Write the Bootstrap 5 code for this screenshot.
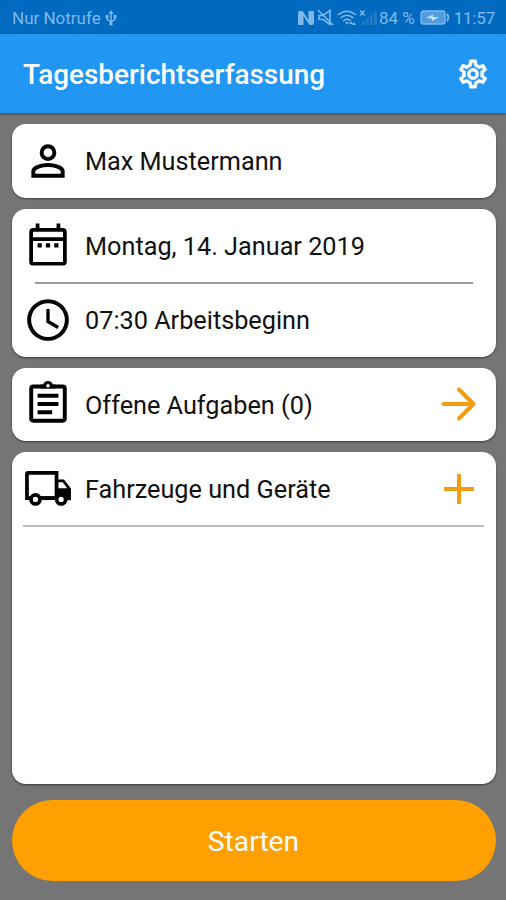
<!DOCTYPE html>
<html lang="de">
<head>
<meta charset="utf-8">
<meta name="viewport" content="width=device-width, initial-scale=1">
<title>Tagesberichtserfassung</title>
<link href="https://cdn.jsdelivr.net/npm/bootstrap@5.3.0/dist/css/bootstrap.min.css" rel="stylesheet">
<style>
body{font-family:Roboto,"Liberation Sans",sans-serif;background:#757575;color:#111;height:900px;overflow:hidden}
svg{display:block;flex:none}
.status-bar{height:34px;background:#0069c0;color:#7fb9ec;font-size:17px;line-height:34px;padding:2px 11px 0 12px}
.status-bar .clock{letter-spacing:-.2px}
.app-bar{height:79px;background:#2196f3;padding:2px 16px 0 23px;box-shadow:0 1px 3px rgba(0,0,0,.45)}
.app-title{font-size:27.900px;font-weight:500;line-height:40px}
.content{padding:11px 10.5px 19px 11.5px;gap:11px}
.panel{border:0;border-radius:14px;box-shadow:0 1px 2px rgba(0,0,0,.5)}
.entry{height:73.5px;padding:0 13px 0 11px;font-size:25.250px}
.entry .label{margin-left:12.5px;padding-top:3px;white-space:nowrap}
.divider{height:2px;background:#bbb;margin:-1px 12px -1px 11px}
.divider.inset{background:#999;margin:0 23px -1px 23px}
.accent{color:#f39c12}
.start{height:81px;background:#ffa000;font-size:28.200px;padding-top:9px;margin-top:5px;border:0}
.start:hover{background:#ffa000}
</style>
</head>
<body class="d-flex flex-column">
<div class="status-bar d-flex align-items-center justify-content-between">
  <div class="d-flex align-items-center"><span>Nur Notrufe</span>
    <svg class="ms-1" width="12" height="17" viewBox="0 0 12 17" fill="none" stroke="currentColor" stroke-width="1.5"><path d="M6 2v12M2 6v3l4 3 4-3V6"/><path d="M6 0l2.500 4h-5zM.5 5h3v3h-3zM8.500 5h3v3h-3z" fill="currentColor" stroke="none"/><circle cx="6" cy="14" r="1.800" fill="currentColor" stroke="none"/></svg>
  </div>
  <div class="d-flex align-items-center">
    <svg width="83" height="18" viewBox="0 0 83 18" fill="none" stroke="currentColor" stroke-width="1.600">
      <path d="M2 16V4q0-2 2-2h2.500l6 9V2H17q1 0 1 1.500V14q0 2-2 2h-2.500l-6-9v9z" fill="currentColor" stroke="none"/>
      <path d="M23 6.500h4l7-5v14l-7-5h-4zM22 1l15 15"/>
      <path d="M42 6q9-7.500 18 0M44.500 9q6.500-5.500 13 0M47 12q4-3.500 8 0"/><path d="M49 13h4l-2 3zM53 15l2-2.500 2 2.500zM58 13l-2 3h4z" fill="currentColor" stroke="none"/>
      <path d="M64 1.500l4.500 5M68.500 1.500l-4.500 5" stroke-width="1.400"/>
      <path d="M66 16v-4h3v4zM70 16V9h3v7zM74 16V6h3v10zM78 16V3h3v13z" fill="#1f7ac8" stroke="none"/>
    </svg>
    <span>84 %</span>
    <svg class="ms-1" width="35" height="16" viewBox="1 0 35 16"><rect x="3" y="1" width="24" height="13" rx="2.500" fill="#4f9bdc" stroke="#7fb9ec" stroke-width="1.300"/><path d="M29 4q3 3.500 0 7" fill="none" stroke="#7fb9ec" stroke-width="2"/><path d="M8 8l7-3.500V7h6l-7 4V8.500z" fill="#c5e2fa"/></svg>
    <span class="clock">11:57</span>
  </div>
</div>
<header class="app-bar d-flex align-items-center justify-content-between text-white">
  <h1 class="app-title m-0">Tagesberichtserfassung</h1>
  <svg width="34" height="34" viewBox="0 .7 24 24" fill="currentColor" stroke="currentColor" stroke-width=".35"><path d="M12 8a4 4 0 1 1 0 8 4 4 0 0 1 0-8m0 2a2 2 0 1 0 0 4 2 2 0 0 0 0-4m-2 12c-.25 0-.46-.18-.5-.42l-.37-2.650c-.63-.25-1.170-.59-1.690-.99l-2.490 1.010c-.22.08-.49 0-.61-.22l-2-3.460a.493.493 0 0 1 .12-.64l2.110-1.660L4.500 12l.07-1-2.110-1.630a.493.493 0 0 1-.12-.64l2-3.460c.12-.22.39-.31.61-.22l2.490 1c.52-.39 1.060-.73 1.690-.98l.37-2.650c.04-.24.25-.42.5-.42h4c.25 0 .46.18.5.42l.37 2.650c.63.25 1.170.59 1.690.98l2.490-1c.22-.09.49 0 .61.22l2 3.460c.13.22.07.49-.12.64L19.430 11l.07 1-.07 1 2.110 1.630c.19.15.25.42.12.64l-2 3.460c-.12.22-.39.31-.61.22l-2.490-1c-.52.39-1.060.73-1.690.98l-.37 2.650c-.04.24-.25.42-.5.42zm1.250-18-.37 2.610c-1.200.25-2.260.89-3.030 1.780L5.440 7.350l-.75 1.300L6.800 10.200a6.550 6.550 0 0 0 0 3.600l-2.120 1.560.75 1.300 2.430-1.040c.77.88 1.820 1.520 3.010 1.760l.37 2.620h1.520l.37-2.610c1.190-.25 2.240-.89 3.010-1.770l2.430 1.040.75-1.300-2.120-1.550c.4-1.170.4-2.440 0-3.610l2.110-1.550-.75-1.300-2.410 1.040a5.420 5.420 0 0 0-3.030-1.770L12.750 4z"/></svg>
</header>
<main class="content d-flex flex-column flex-grow-1">
  <section class="panel card">
    <div class="entry d-flex align-items-center">
      <svg width="50" height="50" viewBox="0 0 24 24" fill="none" stroke="#000" stroke-width="1.900"><circle cx="12" cy="8" r="3.050"/><path d="M4.950 19.050V17c0-2 4.300-3.050 7.050-3.050S19.050 15 19.050 17v2.050z"/></svg>
      <span class="label">Max Mustermann</span>
    </div>
  </section>
  <section class="panel card">
    <div class="entry d-flex align-items-center">
      <svg width="50" height="50" viewBox="0 0 24 24" fill="none" stroke="#000" stroke-width="1.800"><rect x="3.900" y="4.700" width="16.200" height="16.300" rx="1"/><path d="M4 9.200h16M7 4.500V1.700M17 4.500V1.700"/><path d="M7 11.200h2v2H7zM11 11.200h2v2h-2zM15 11.200h2v2h-2z" fill="#000" stroke="none"/></svg>
      <span class="label">Montag, 14. Januar 2019</span>
    </div>
    <div class="divider inset"></div>
    <div class="entry d-flex align-items-center">
      <svg width="50" height="50" viewBox="0 0 24 24" fill="none" stroke="#000" stroke-width="1.900"><circle cx="12" cy="12" r="9.050"/><path d="M12 6.700V12.700l4.900 2.900" stroke-width="1.600"/></svg>
      <span class="label">07:30 Arbeitsbeginn</span>
    </div>
  </section>
  <section class="panel card">
    <div class="entry d-flex align-items-center">
      <svg width="50" height="50" viewBox="0 -.3 24 24" fill="none" stroke="#000" stroke-width="1.900"><rect x="3.950" y="3.300" width="16.100" height="16.400" rx="1"/><path d="M7 7.700h10M7 11.700h10M7 15.700h7"/><path d="M8.500 4.200V2.300h1.200a2.450 2.450 0 0 1 4.600 0h1.200v1.900z" fill="#000" stroke="none"/><circle cx="12" cy="2.900" r=".85" fill="#fff" stroke="none"/></svg>
      <span class="label">Offene Aufgaben (0)</span>
      <svg class="accent ms-auto" width="50" height="50" viewBox="0 0 50 50" fill="none" stroke="currentColor" stroke-width="4" stroke-linecap="round" stroke-linejoin="round"><path d="M10.500 25h30M26 10.500L40.500 25 26 39.500"/></svg>
    </div>
  </section>
  <section class="panel card flex-grow-1">
    <div class="entry d-flex align-items-center">
      <svg width="50" height="50" viewBox="0 .6 24 24" fill="none" stroke="#000" stroke-width="1.800"><path d="M3.500 17H1.900V5.400Q1.900 4.900 2.400 4.900H16.100V17H8"/><path d="M16 8h3.700L23 12.300V18h-2.600a2.900 2.900 0 0 0-4.400-2.500z" fill="#000" stroke="none"/><path d="M17 9.400h2.100l2.100 2.800H17z" fill="#fff" stroke="none"/><path d="M8 17h7"/><circle cx="6" cy="17.600" r="2.150" fill="#fff"/><circle cx="18.300" cy="17.600" r="2.150" fill="#fff"/></svg>
      <span class="label">Fahrzeuge und Geräte</span>
      <svg class="accent ms-auto" width="50" height="50" viewBox="0 0 50 50" fill="none" stroke="currentColor" stroke-width="4"><path d="M11 25h30M26 10v30"/></svg>
    </div>
    <div class="divider"></div>
  </section>
  <button type="button" class="start btn rounded-pill text-white w-100">Starten</button>
</main>
<script src="https://cdn.jsdelivr.net/npm/bootstrap@5.3.0/dist/js/bootstrap.bundle.min.js"></script>
</body>
</html>
